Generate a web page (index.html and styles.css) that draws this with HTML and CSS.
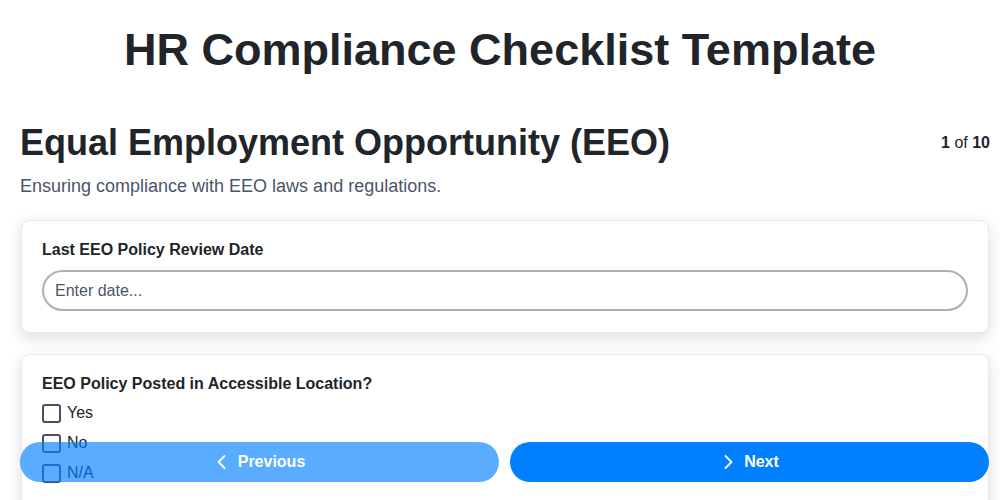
FILE: index.html
```html
<!DOCTYPE html>
<html>
<head>
<meta charset="utf-8">
<link rel="stylesheet" href="styles.css">
</head>
<body>
<div class="page">
  <h1 class="title">HR Compliance Checklist Template</h1>
  <div class="section-head">
    <h2 class="section-title">Equal Employment Opportunity (EEO)</h2>
    <div class="counter"><b>1</b> of <b>10</b></div>
  </div>
  <p class="section-desc">Ensuring compliance with EEO laws and regulations.</p>

  <div class="card card-input">
    <label class="field-label">Last EEO Policy Review Date</label>
    <input class="text-input" type="text" placeholder="Enter date...">
  </div>

  <div class="card card-choice">
    <div class="field-label">EEO Policy Posted in Accessible Location?</div>
    <div class="options">
      <label class="option"><span class="box"></span><span>Yes</span></label>
      <label class="option"><span class="box"></span><span>No</span></label>
      <label class="option"><span class="box"></span><span>N/A</span></label>
    </div>
  </div>
</div>

<div class="nav">
  <button class="btn btn-prev">
    <svg width="16" height="16" viewBox="0 0 16 16" fill="none" stroke="#fff" stroke-width="1.8" stroke-linecap="round" stroke-linejoin="round"><path d="M10.5 2 L4.5 8 L10.5 14"/></svg>
    <span>Previous</span>
  </button>
  <button class="btn btn-next">
    <svg width="16" height="16" viewBox="0 0 16 16" fill="none" stroke="#fff" stroke-width="1.8" stroke-linecap="round" stroke-linejoin="round"><path d="M5.5 2 L11.5 8 L5.5 14"/></svg>
    <span>Next</span>
  </button>
</div>
</body>
</html>
```

FILE: styles.css
```css
* { box-sizing: border-box; }
html, body { margin: 0; padding: 0; background: #fff; }
body {
  font-family: "Liberation Sans", Arial, sans-serif;
  color: #212529;
}
.page {
  padding: 0 10px 0 20px;
}
.title {
  margin: 0 0 0 -10px;
  padding-top: 24px;
  height: 102px;
  text-align: center;
  font-size: 45px;
  font-weight: 700;
  line-height: 52px;
  color: #212529;
}
.section-head {
  display: flex;
  justify-content: space-between;
  align-items: center;
  height: 40px;
  margin-top: 21px;
}
.section-title {
  margin: 0;
  font-size: 36px;
  line-height: 40px;
  font-weight: 700;
  color: #212529;
}
.counter {
  font-size: 16px;
  color: #212529;
}
.section-desc {
  margin: 8px 0 0;
  font-size: 18px;
  line-height: 30px;
  color: #4a5568;
}
.card {
  margin: 19px 1px 0 1px;
  background: #fff;
  border: 1px solid #e8e8ef;
  border-radius: 8px;
  box-shadow: 0 5px 15px rgba(40, 40, 70, 0.15);
  padding: 18px 20px 21px 20px;
}
.card + .card { margin-top: 21px; }
.field-label {
  display: block;
  font-size: 16px;
  font-weight: 700;
  line-height: 22px;
  margin-bottom: 9px;
  color: #212529;
}
.card-choice .field-label { margin-bottom: 3px; }
.text-input {
  display: block;
  width: 100%;
  height: 41px;
  border: 2px solid #a8b0b9;
  border-radius: 21px;
  padding: 0 11px;
  font-family: "Liberation Sans", Arial, sans-serif;
  font-size: 16px;
  color: #212529;
  background: #fff;
  outline: none;
}
.text-input::placeholder { color: #4a5568; }
.options {
  display: flex;
  flex-direction: column;
}
.option {
  display: flex;
  align-items: center;
  gap: 6px;
  height: 30px;
  font-size: 16px;
  color: #212529;
}
.box {
  width: 19px;
  height: 19px;
  border: 2px solid #4a5060;
  border-radius: 3px;
  background: #fff;
  flex: none;
}
.nav {
  position: fixed;
  left: 20px;
  right: 11px;
  bottom: 18px;
  display: flex;
  gap: 11px;
}
.btn {
  flex: 1;
  height: 40px;
  border: none;
  border-radius: 20px;
  background: #0080ff;
  color: #fff;
  font-family: "Liberation Sans", Arial, sans-serif;
  font-size: 16px;
  font-weight: 700;
  display: flex;
  align-items: center;
  justify-content: center;
  gap: 8px;
  cursor: pointer;
}
.btn-prev { opacity: 0.65; }
```
